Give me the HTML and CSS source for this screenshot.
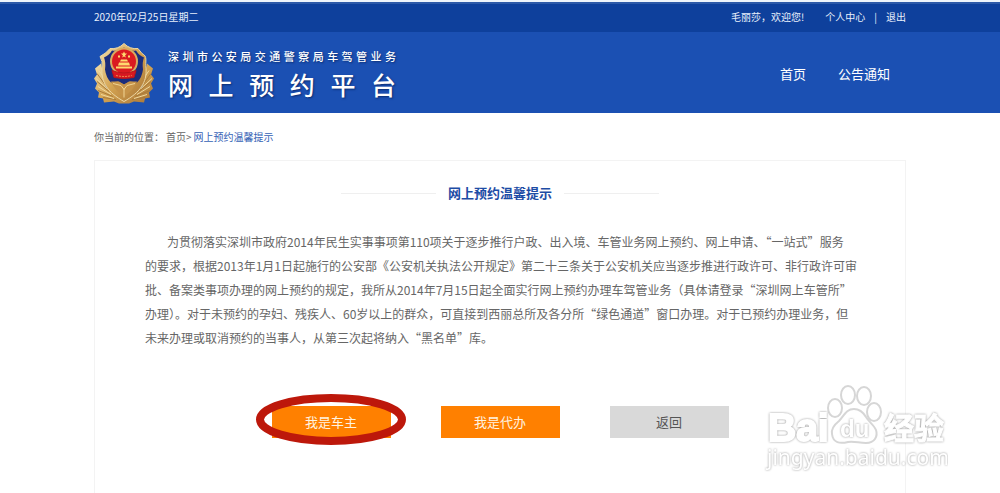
FILE: index.html
```html
<!DOCTYPE html>
<html lang="zh-CN">
<head>
<meta charset="utf-8">
<meta name="viewport" content="width=device-width, initial-scale=1">
<title>网上预约温馨提示</title>
<link rel="stylesheet" href="styles.css">
</head>
<body>
<div class="topbar">
  <div class="container topbar-inner">
    <span>2020年02月25日星期二</span>
    <div class="user">
      <span class="welcome">毛丽莎，欢迎您!</span>
      <a href="#">个人中心</a>
      <span class="divider">|</span>
      <a href="#">退出</a>
    </div>
  </div>
</div>
<header class="header">
  <div class="container header-inner">
    <div class="brand">
      <svg class="badge" viewBox="0 0 60 62" aria-hidden="true">
        <defs>
          <linearGradient id="gold" x1="0" y1="0" x2="1" y2="1">
            <stop offset="0" stop-color="#f3dfaa"/>
            <stop offset=".5" stop-color="#d3a352"/>
            <stop offset="1" stop-color="#a87435"/>
          </linearGradient>
        </defs>
        <path fill="url(#gold)" d="M7 21 1 26 3 32 0 36 3 41 1 46 5 50 4 55 9 56 10 60 20 59 25 61H35L40 59 50 60 51 56 56 55 55 50 59 46 57 41 60 36 57 32 59 26 53 21 48 45H12Z"/>
        <g fill="none" stroke="#a87a3a" stroke-width="1">
          <path d="M3 31 11 42M3 39 15 49M4 48 19 54M9 55 22 57M57 31 49 42M57 39 45 49M56 48 41 54M51 55 38 57"/>
        </g>
        <g fill="none" stroke="#f0d9a0" stroke-width="1">
          <path d="M5 28 11 37M2 36 13 46M4 44 17 52M7 52 20 56M55 28 49 37M58 36 47 46M56 44 43 52M53 52 40 56"/>
        </g>
        <path fill="url(#gold)" stroke="#ecd7a5" stroke-width="1" d="M30 1Q24 7 16 6 12 11 6 14 9 18 8 26C7 40 14 50 30 59 46 50 53 40 52 26 51 18 54 14 48 11L44 6Q36 7 30 1Z"/>
        <path fill="#1b2d7c" d="M30 5Q24 9 18 8 15 13 10 15 12 20 11 27 12 35 17 40L24 39 30 42 36 39 43 40Q48 35 49 27 48 20 50 15 45 13 42 8 36 9 30 5Z"/>
        <path fill="#c69349" d="M17 39 25 39 30 42 35 39 43 39Q39 48 30 54 21 48 17 39Z"/>
        <path fill="none" stroke="#f0d596" d="M19 41 27 43 30 47 33 43 41 41M30 46V55"/>
        <circle cx="30" cy="19" r="14" fill="#d9ab5f"/>
        <circle cx="30" cy="19" r="12" fill="#db1a20"/>
        <path fill="#ffd96e" d="m30 9 1 2h2l-2 2 1 2-2-1-2 1 1-2-2-2h2ZM24 13h2v2h-2ZM34 13h2v2h-2ZM25 20h10l1 3H24ZM27 17h6l1 2h-8ZM22 24h16v2H22Z"/>
        <path fill="#d81820" stroke="#b9161c" d="M18 28Q30 33 42 28L40 35Q30 37 20 35Z"/>
        <path fill="none" stroke="#ee8b4a" stroke-dasharray="2 1" d="M22 33Q30 35 38 33"/>
      </svg>
      <div class="brand-text">
        <div class="brand-owner">深圳市公安局交通警察局车驾管业务</div>
        <div class="brand-name">网上预约平台</div>
      </div>
    </div>
    <nav class="nav">
      <a href="#">首页</a>
      <a href="#">公告通知</a>
    </nav>
  </div>
</header>
<main class="container main">
  <div class="breadcrumb">
    <span>你当前的位置：</span>
    <span><a href="#">首页</a>&gt;</span>
    <a class="current" href="#">网上预约温馨提示</a>
  </div>
  <section class="card">
    <h1 class="title">网上预约温馨提示</h1>
    <p class="notice">为贯彻落实深圳市政府2014年民生实事事项第110项关于逐步推行户政、出入境、车管业务网上预约、网上申请、“一站式”服务<br>的要求，根据2013年1月1日起施行的公安部《公安机关执法公开规定》第二十三条关于公安机关应当逐步推进行政许可、非行政许可审<br>批、备案类事项办理的网上预约的规定，我所从2014年7月15日起全面实行网上预约办理车驾管业务（具体请登录“深圳网上车管所”<br>办理）。对于未预约的孕妇、残疾人、60岁以上的群众，可直接到西丽总所及各分所“绿色通道”窗口办理。对于已预约办理业务，但<br>未来办理或取消预约的当事人，从第三次起将纳入“黑名单”库。</p>
    <div class="actions">
      <div class="marked">
        <button class="btn" type="button">我是车主</button>
        <svg class="ring" viewBox="0 0 150 51" aria-hidden="true">
          <ellipse cx="75" cy="25.5" rx="71" ry="21.5" fill="none" stroke="#bd180b" stroke-width="8"/>
        </svg>
      </div>
      <button class="btn" type="button">我是代办</button>
      <button class="btn btn-back" type="button">返回</button>
    </div>
    <svg class="watermark" viewBox="0 0 184 92" aria-hidden="true">
      <g class="paw">
        <ellipse cx="71" cy="25" rx="7" ry="9"/>
        <ellipse cx="84" cy="12" rx="7" ry="9"/>
        <ellipse cx="100" cy="13" rx="7" ry="9"/>
        <ellipse cx="110" cy="29" rx="7" ry="9"/>
        <path d="M90 26C82 26 80 33 75 38 70 42 67 46 68 51 69 60 76 61 84 59 90 58 95 60 102 60 111 60 114 53 112 47 110 42 105 39 102 34 99 29 96 26 90 26Z"/>
      </g>
      <text class="mark mark-logo" x="4" y="58">Bai</text>
      <text class="mark mark-du" x="76" y="54">du</text>
      <text class="mark mark-cn" x="120" y="56">经验</text>
      <text class="mark mark-url" x="3" y="82">jingyan.baidu.com</text>
    </svg>
  </section>
</main>
</body>
</html>
```
FILE: styles.css
```css
* {
  box-sizing: border-box;
}

body {
  display: flex;
  flex-direction: column;
  min-height: 100vh;
  margin: 0;
  border-top: 2px solid #eef4fb;
  background: #fff;
  color: #666;
  font-family: "Noto Sans CJK SC", "Noto Sans", sans-serif;
  font-size: 10px;
  line-height: 20px;
}

a {
  color: inherit;
  text-decoration: none;
}

.container {
  width: 100%;
  max-width: 812px;
  margin: 0 auto;
}

.topbar {
  border-top: 2px solid #2c59a8;
  background: #0e409c;
  color: #e8effb;
}

.topbar-inner {
  display: flex;
  justify-content: space-between;
  padding: 3px 0 5px;
}

.user {
  display: flex;
  gap: 9px;
}

.welcome {
  margin-right: 12px;
}

.header {
  background: #1b50b3;
  color: #fff;
}

.header-inner {
  display: flex;
  align-items: center;
  justify-content: space-between;
  padding: 10px 16px 8px 0;
}

.brand {
  display: flex;
  align-items: center;
  gap: 14px;
}

.badge {
  width: 60px;
  height: 63px;
}

.brand-text {
  width: 228px;
  text-shadow: 1px 1px 2px #0a2c70;
  font-weight: 500;
}

.brand-owner,
.brand-name {
  text-align: justify;
  text-align-last: justify;
}

.brand-owner {
  font-size: 11px;
  line-height: 20px;
}

.brand-name {
  font-size: 25px;
  font-weight: 500;
  line-height: 36px;
}

.nav {
  display: flex;
  gap: 32px;
  font-size: 13px;
}

.main {
  display: flex;
  flex: 1;
  flex-direction: column;
}

.breadcrumb {
  display: flex;
  gap: 2px;
  padding: 14px 0 13px;
}

.current {
  color: #3462b5;
}

.card {
  position: relative;
  flex: 1;
  padding: 20px 40px 54px;
  border: 1px solid #f3f3f3;
  border-bottom: 0;
}

.title {
  display: flex;
  align-items: center;
  justify-content: center;
  gap: 12px;
  margin: 0 0 25px;
  color: #1d4ca5;
  font-size: 13px;
  line-height: 24px;
}

.title::before,
.title::after {
  width: 95px;
  height: 1px;
  background: #efefef;
  content: "";
}

.notice {
  margin: 0 0 56px;
  padding-left: 10px;
  font-size: 12px;
  line-height: 24px;
  text-indent: 22px;
}

.actions {
  display: flex;
  justify-content: center;
  gap: 50px;
}

.marked {
  position: relative;
}

.btn {
  width: 119px;
  height: 32px;
  padding: 0;
  border: 0;
  background: #ff8000;
  color: #fff3e0;
  font: inherit;
  font-size: 13px;
}

.btn-back {
  background: #d9d9d9;
  color: #555;
}

.ring {
  position: absolute;
  top: -12px;
  left: -16px;
  width: 150px;
  height: 51px;
  pointer-events: none;
}

.watermark {
  position: absolute;
  right: -43px;
  bottom: 18px;
  width: 184px;
  height: 92px;
  pointer-events: none;
}

.paw {
  fill: #fff;
  stroke: #d6d6d6;
  stroke-width: 2px;
}

.mark {
  fill: #fff;
  filter: drop-shadow(0 0 1px #999);
}

.mark-logo {
  stroke: #fff;
  stroke-width: 2px;
  font: 700 39px "Liberation Sans", sans-serif;
}

.mark-du {
  font: 700 24px "Liberation Sans", sans-serif;
}

.mark-cn {
  stroke: #fff;
  stroke-width: 1px;
  font: 700 30px "Noto Sans CJK SC", sans-serif;
}

.mark-url {
  font: 400 21px "Noto Sans", sans-serif;
}
```
